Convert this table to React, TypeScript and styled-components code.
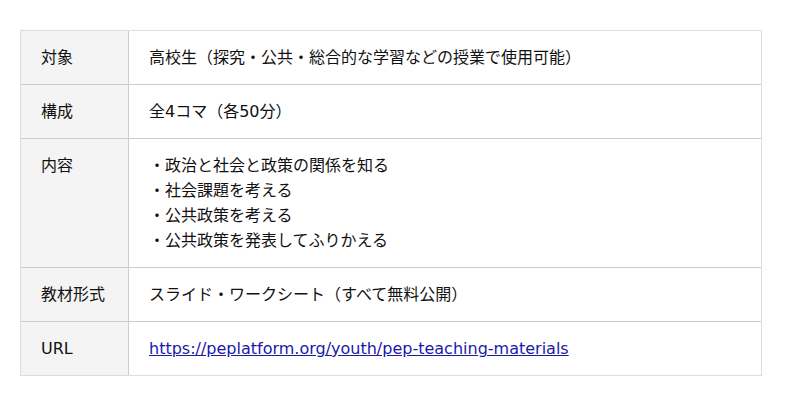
import React from "react";
import styled, { createGlobalStyle } from "styled-components";

const GlobalStyle = createGlobalStyle`
  html, body {
    margin: 0;
    padding: 0;
    background: #ffffff;
  }
  body {
    font-family: "DejaVu Sans", "Noto Sans CJK JP", sans-serif;
    color: #111111;
  }
`;

const Page = styled.div`
  padding: 30px 0 0 20px;
`;

const Table = styled.table`
  width: 742px;
  border-collapse: separate;
  border-spacing: 0;
  border: 1px solid #dddddd;
  font-size: 16px;
  line-height: 25px;
`;

const Row = styled.tr<{ $first?: boolean }>`
  & > th,
  & > td {
    border-top: ${(p) => (p.$first ? "none" : "1px solid #cccccc")};
  }
`;

const Label = styled.th`
  width: 67px;
  padding: 14px 20px;
  background: #f4f4f4;
  border-right: 1px solid #cccccc;
  text-align: left;
  vertical-align: top;
  font-weight: normal;
  white-space: nowrap;
`;

const Value = styled.td`
  padding: 14px 20px;
  vertical-align: top;
  background: #ffffff;
`;

const Line = styled.div``;

const Link = styled.a`
  color: #1a1aa6;
  text-decoration: underline;
`;

const rows: { label: string; value: React.ReactNode }[] = [
  { label: "対象", value: "高校生（探究・公共・総合的な学習などの授業で使用可能）" },
  { label: "構成", value: "全4コマ（各50分）" },
  {
    label: "内容",
    value: (
      <>
        <Line>・政治と社会と政策の関係を知る</Line>
        <Line>・社会課題を考える</Line>
        <Line>・公共政策を考える</Line>
        <Line>・公共政策を発表してふりかえる</Line>
      </>
    ),
  },
  { label: "教材形式", value: "スライド・ワークシート（すべて無料公開）" },
  {
    label: "URL",
    value: (
      <Link href="https://peplatform.org/youth/pep-teaching-materials">
        https://peplatform.org/youth/pep-teaching-materials
      </Link>
    ),
  },
];

export default function App() {
  return (
    <>
      <GlobalStyle />
      <Page>
        <Table>
          <tbody>
            {rows.map((r, i) => (
              <Row key={r.label} $first={i === 0}>
                <Label>{r.label}</Label>
                <Value>{r.value}</Value>
              </Row>
            ))}
          </tbody>
        </Table>
      </Page>
    </>
  );
}
